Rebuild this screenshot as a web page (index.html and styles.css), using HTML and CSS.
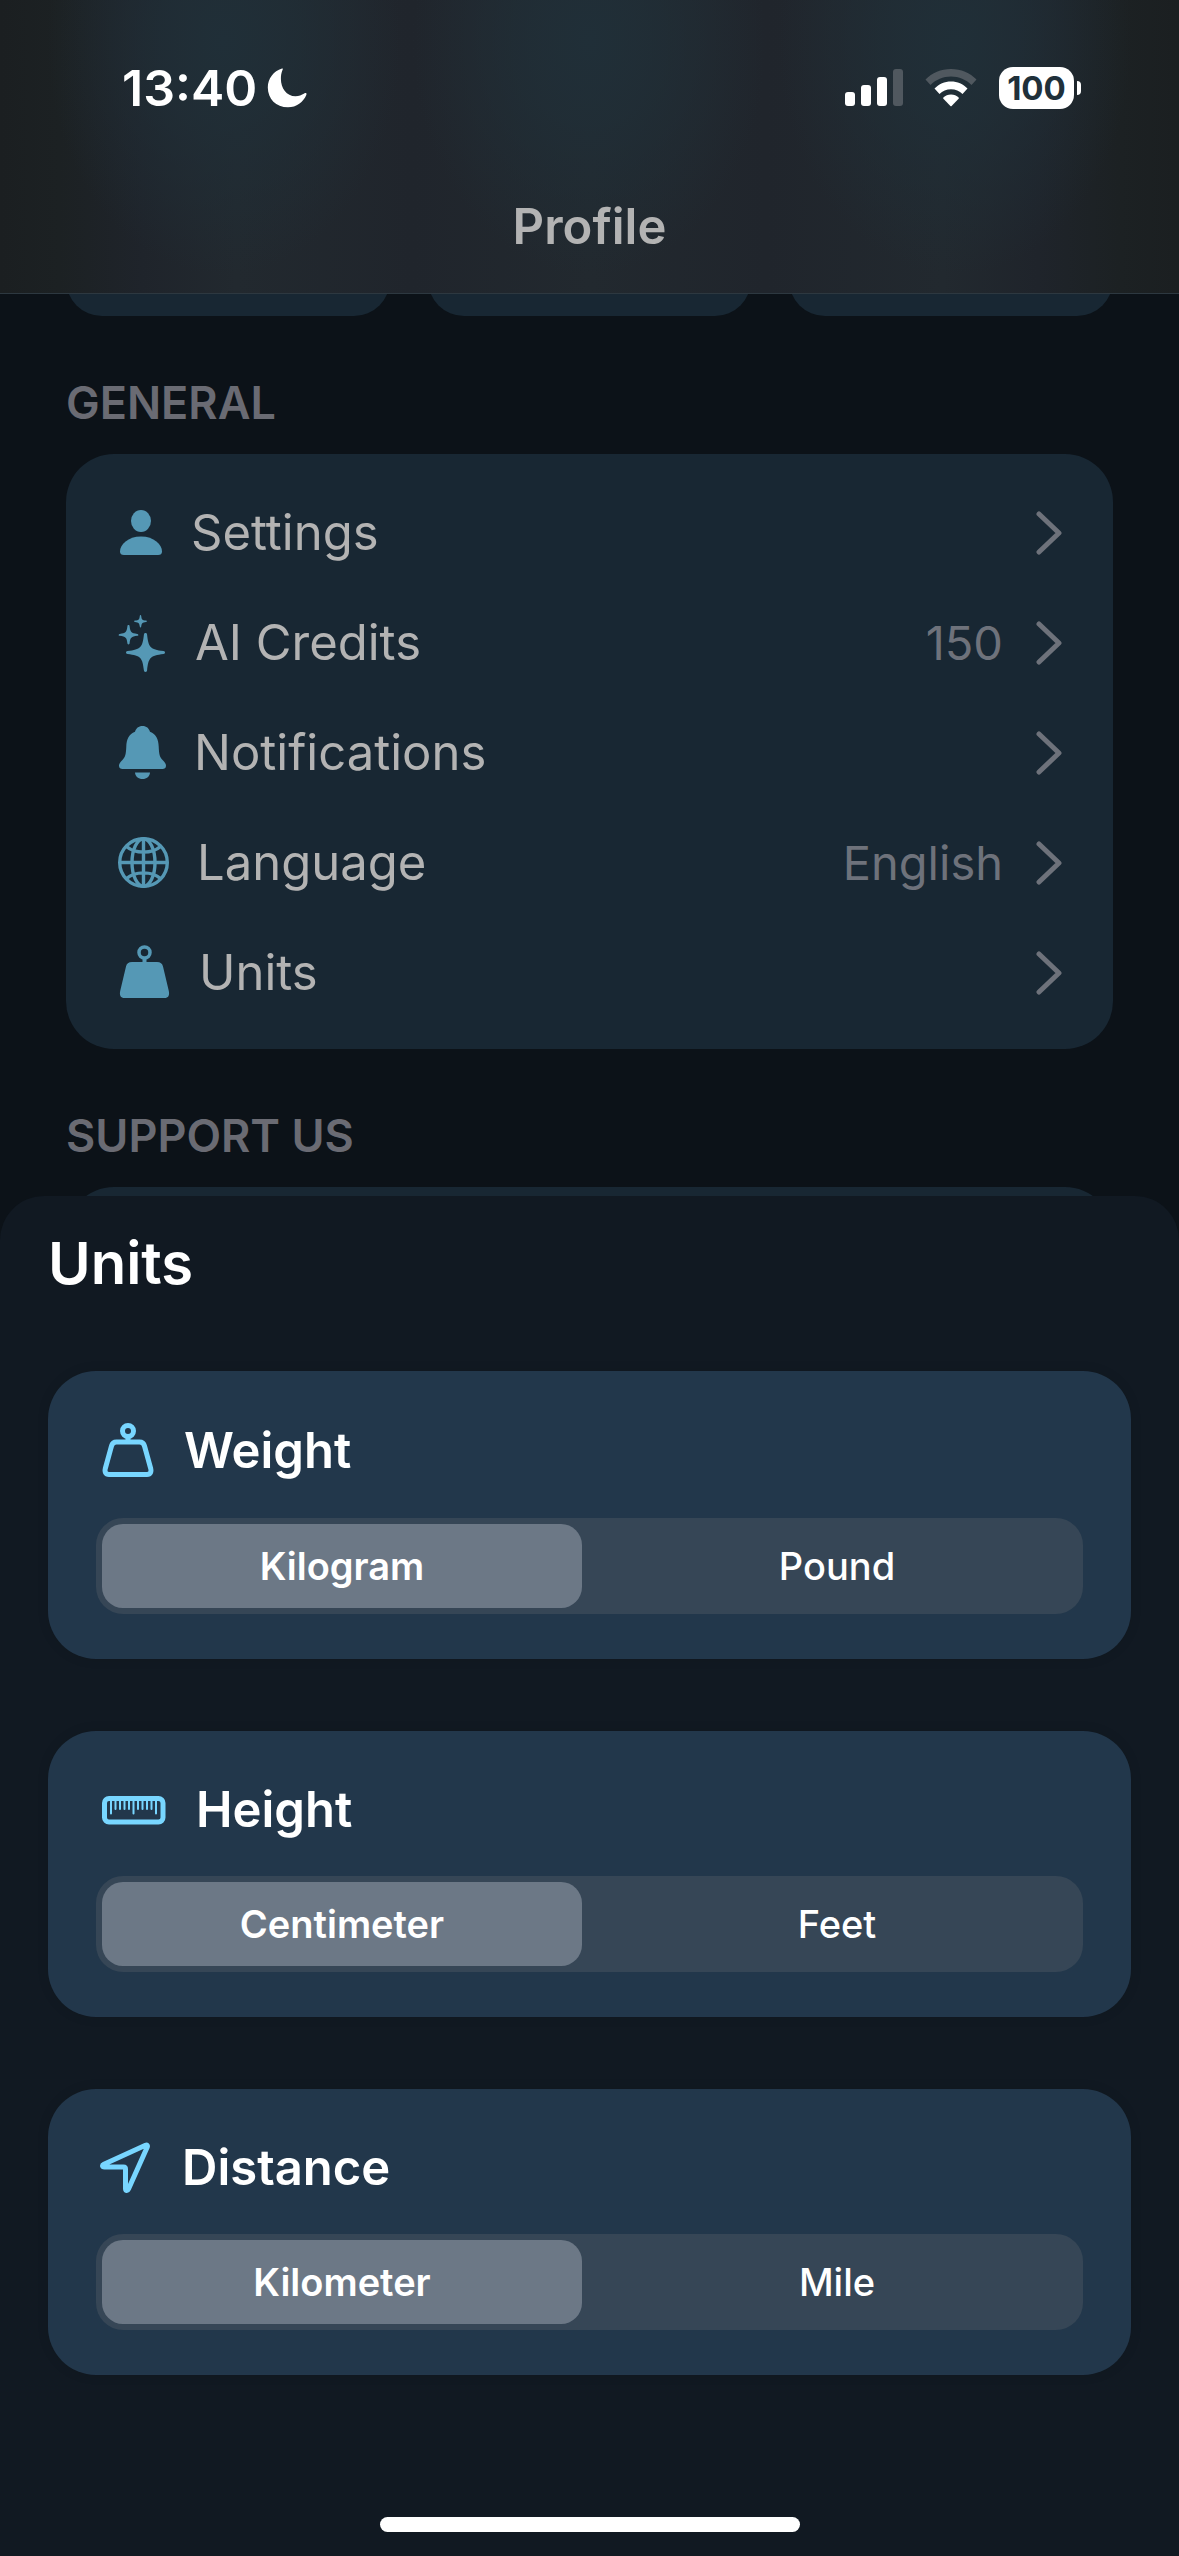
FILE: index.html
```html
<!DOCTYPE html>
<html lang="en">
<head>
<meta charset="utf-8">
<meta name="viewport" content="width=device-width, initial-scale=1">
<title>Profile</title>
<link rel="stylesheet" href="styles.css">
</head>
<body>
<header class="topbar">
  <div class="status">
    <div class="status-left">
      <time class="clock">13:40</time>
      <svg class="moon" width="40" height="40" viewBox="0 0 40 40" aria-hidden="true"><path d="M15 .6C16.200 .2 16 1 15.400 2.200C14.200 5 13.900 8 13.900 11C13.900 20 19.500 28.300 28.500 28.300C32 28.300 34.500 27 37.200 25.500C38.800 24.700 39.900 25.200 39.400 26.700C36.400 34 29.500 39.300 21 39.300C9 39.300 .8 30.800 .8 19.500C.8 10.800 6.500 3.300 15 .6Z"/></svg>
    </div>
    <div class="status-right">
      <svg width="58" height="38" viewBox="0 0 58 38" fill="#fff" aria-hidden="true"><rect x="0" y="23" width="10" height="14" rx="3"/><rect x="16" y="16" width="10" height="21" rx="3"/><rect x="32" y="8" width="10" height="29" rx="3"/><rect class="dim" x="48" y="0" width="10" height="37" rx="3"/></svg>
      <svg width="52" height="38" viewBox="0 0 52 38" aria-hidden="true"><path class="dim" d="M26 0C36 0 45 4 51.500 10.500L46.500 16C41 10.500 34 7.500 26 7.500S11 10.500 5.500 16L.5 10.500C7 4 16 0 26 0Z"/><path fill="#fff" d="M26 12.500C32.500 12.500 38 15 42.500 19.500L37.500 25C34.500 22 30.500 20.300 26 20.300S17.500 22 14.500 25L9.500 19.500C14 15 19.500 12.500 26 12.500Z"/><path fill="#fff" d="M26 25.500C29 25.500 31.700 26.600 33.600 28.500C34 29 34 29.300 33.600 29.800L26.600 37C26.200 37.400 25.800 37.400 25.400 37L18.400 29.800C18 29.300 18 29 18.400 28.500C20.300 26.600 23 25.500 26 25.500Z"/></svg>
      <div class="battery"><span class="battery-level">100</span><span class="battery-cap"></span></div>
    </div>
  </div>
  <h1 class="page-title">Profile</h1>
</header>

<main class="page">
  <div class="stats">
    <div class="stat"></div><div class="stat"></div><div class="stat"></div>
  </div>

  <section class="group">
    <h2 class="group-title">GENERAL</h2>
    <div class="panel">
      <button class="row" type="button">
        <svg width="46" height="60" viewBox="0 0 46 60" aria-hidden="true"><ellipse cx="24" cy="18" rx="10" ry="11"/><path d="M7 52Q3 52 3 48.500C3 41.500 11 33.500 24 33.500S45 41.500 45 48.500Q45 52 41 52Z"/></svg>
        <span class="row-label">Settings</span>
        <svg class="chevron" width="26" height="44" viewBox="0 0 26 44" aria-hidden="true"><path d="M3 3L23 22L3 41"/></svg>
      </button>
      <button class="row" type="button">
        <svg width="50" height="60" viewBox="0 0 50 60" aria-hidden="true"><path d="M28.500 20C29.500 20 30 20.700 30.100 21.700C31.500 34 33 36.500 46.500 38C47.500 38.100 48 38.600 48 39.500S47.500 40.900 46.500 41C33 42.500 31.500 45 30.100 57.300C30 58.300 29.500 59 28.500 59S27 58.300 26.900 57.300C25.500 45 24 42.500 10.500 41C9.500 40.900 9 40.400 9 39.500S9.500 38.100 10.500 38C24 36.500 25.500 34 26.900 21.700C27 20.700 27.500 20 28.500 20Z"/><path d="M11.500 12C12.300 12 12.500 12.500 12.600 13.200C13.300 19 14.200 20 20.300 20.900C21 21 21.300 21.300 21.300 21.900S21 22.700 20.300 22.800C14.200 23.700 13.300 24.500 12.600 30.300C12.500 31 12.300 31.500 11.500 31.500S10.500 31 10.400 30.300C9.700 24.500 8.800 23.700 2.700 22.800C2 22.700 1.700 22.500 1.700 21.900S2 21 2.700 20.900C8.800 20 9.700 19 10.400 13.200C10.500 12.500 10.700 12 11.500 12Z"/><path d="M23.500 2C24 2 24.100 2.400 24.200 2.900C24.700 6.500 25.200 7 29 7.500C29.600 7.600 29.900 7.800 29.900 8.200S29.600 8.800 29 8.900C25.200 9.400 24.700 9.900 24.200 13.500C24.100 14 24 14.400 23.500 14.400S22.900 14 22.800 13.500C22.300 9.900 21.800 9.400 18 8.900C17.400 8.800 17.100 8.600 17.100 8.200S17.400 7.600 18 7.500C21.800 7 22.300 6.500 22.800 2.900C22.900 2.400 23 2 23.500 2Z"/></svg>
        <span class="row-label">AI Credits</span>
        <span class="row-value">150</span>
        <svg class="chevron" width="26" height="44" viewBox="0 0 26 44" aria-hidden="true"><path d="M3 3L23 22L3 41"/></svg>
      </button>
      <button class="row" type="button">
        <svg width="49" height="60" viewBox="0 0 49 60" aria-hidden="true"><path d="M25.500 3C29.500 3 32 5.300 33 8.800C39 11 41.500 16.500 41.700 23.500C42 31 42.500 34 45.800 37.200C48 39.500 49 41 49 42.800C49 45 47.500 46 45.500 46H5.500C3.500 46 2 45 2 42.800C2 41 3 39.500 5.200 37.200C8.500 34 9 31 9.300 23.500C9.500 16.500 12 11 18 8.800C19 5.300 21.500 3 25.500 3Z"/><path d="M18 49.500H33C33 53.300 29.500 56 25.500 56S18 53.300 18 49.500Z"/></svg>
        <span class="row-label">Notifications</span>
        <svg class="chevron" width="26" height="44" viewBox="0 0 26 44" aria-hidden="true"><path d="M3 3L23 22L3 41"/></svg>
      </button>
      <button class="row" type="button">
        <svg class="line" width="52" height="60" viewBox="0 0 52 60" aria-hidden="true"><circle cx="26.500" cy="29.500" r="23.800"/><ellipse cx="26.500" cy="29.500" rx="11.500" ry="23.800"/><path d="M26.500 5.500V53.500M2.500 29.500H50.500M9.500 13.500C18 21 35 21 43.500 13.500M9.500 45.500C18 38 35 38 43.500 45.500"/></svg>
        <span class="row-label">Language</span>
        <span class="row-value">English</span>
        <svg class="chevron" width="26" height="44" viewBox="0 0 26 44" aria-hidden="true"><path d="M3 3L23 22L3 41"/></svg>
      </button>
      <button class="row" type="button">
        <svg width="54" height="60" viewBox="0 0 54 60" aria-hidden="true"><circle cx="27.500" cy="9.500" r="5.500" fill="none" stroke="#5598b5" stroke-width="3.500"/><path d="M25.500 14H29.500V19H40C43.500 19 45.300 20.500 46 23.500L51.700 47.500C52.900 52.500 51.200 55 47.500 55H7.500C3.800 55 2.100 52.500 3.300 47.500L9 23.500C9.700 20.500 11.500 19 15 19H25.500Z"/></svg>
        <span class="row-label">Units</span>
        <svg class="chevron" width="26" height="44" viewBox="0 0 26 44" aria-hidden="true"><path d="M3 3L23 22L3 41"/></svg>
      </button>
    </div>
  </section>

  <section class="group">
    <h2 class="group-title">SUPPORT US</h2>
    <div class="panel panel-empty"></div>
  </section>
</main>

<section class="sheet" role="dialog" aria-labelledby="sheet-title">
  <h2 class="sheet-title" id="sheet-title">Units</h2>
  <form class="cards">
    <fieldset class="card" aria-labelledby="weight-title">
      <div class="card-head">
        <svg class="accent" width="54" height="63" viewBox="0 0 54 63" aria-hidden="true"><ellipse cx="28" cy="12" rx="5.500" ry="5.500"/><path d="M28 17.500V22M16.500 23H39.500C42.300 23 43.800 24.300 44.500 27L50.700 49.500C51.500 53 50.500 55.500 47 55.500H9C5.500 55.500 4.500 53 5.300 49.500L11.500 27C12.200 24.300 13.700 23 16.500 23Z"/></svg>
        <h3 class="card-title" id="weight-title">Weight</h3>
      </div>
      <div class="segments">
        <label class="segment"><input type="radio" name="weight" value="kg" checked><span>Kilogram</span></label>
        <label class="segment"><input type="radio" name="weight" value="lb"><span>Pound</span></label>
      </div>
    </fieldset>
    <fieldset class="card" aria-labelledby="height-title">
      <div class="card-head">
        <svg class="accent" width="66" height="60" viewBox="0 0 66 60" aria-hidden="true"><rect x="4.500" y="18.500" width="58.500" height="23.500" rx="4.500"/><path stroke-width="2" d="M11 18V33.500M15.500 18V29M20 18V29M24.500 18V29M29 18V29M33.500 18V33.500M38 18V29M42.500 18V29M47 18V29M51.500 18V29M56 18V33.500"/></svg>
        <h3 class="card-title" id="height-title">Height</h3>
      </div>
      <div class="segments">
        <label class="segment"><input type="radio" name="height" value="cm" checked><span>Centimeter</span></label>
        <label class="segment"><input type="radio" name="height" value="ft"><span>Feet</span></label>
      </div>
    </fieldset>
    <fieldset class="card" aria-labelledby="distance-title">
      <div class="card-head">
        <svg class="accent" width="52" height="60" viewBox="0 0 52 60" aria-hidden="true"><path d="M3.900 26.300L45.500 7.300C47 6.700 47.800 7.500 47.300 9L28.500 51C27.400 53.400 25.500 53 25.500 50.500V31C25.500 29.500 25 29 23.500 29H4.500C2.200 29 1.800 27.300 3.900 26.300Z"/></svg>
        <h3 class="card-title" id="distance-title">Distance</h3>
      </div>
      <div class="segments">
        <label class="segment"><input type="radio" name="distance" value="km" checked><span>Kilometer</span></label>
        <label class="segment"><input type="radio" name="distance" value="mi"><span>Mile</span></label>
      </div>
    </fieldset>
  </form>
  <div class="home-indicator"></div>
</section>
</body>
</html>
```
FILE: styles.css
```css
* { box-sizing: border-box; margin: 0; padding: 0; }

body {
  min-height: 100vh;
  background: #0c1218;
  color: #b3b3b3;
  font-family: Inter, "Liberation Sans", sans-serif;
  overflow: hidden;
}

button { font: inherit; color: inherit; background: none; border: 0; }
svg { display: block; flex: none; }

/* Top bar */
.topbar {
  position: relative;
  z-index: 1;
  height: 294px;
  padding-top: 58px;
  border-bottom: 1px solid #2d3840;
  background:
    radial-gradient(ellipse 15% 80% at 19% 14%, #202f38 0%, #202f38bb 35%, #202f3800 100%),
    radial-gradient(ellipse 15% 80% at 50% 14%, #202f38 0%, #202f38bb 35%, #202f3800 100%),
    radial-gradient(ellipse 15% 80% at 81% 14%, #202f38 0%, #202f38bb 35%, #202f3800 100%),
    linear-gradient(90deg, #1b1f21 0%, #1c2123 5%, #1f242b 12%, #22292f 20%, #20252c 35%, #22292f 50%, #20252c 65%, #22292f 80%, #1f242b 88%, #1c2123 95%, #1b1f21 100%);
}
.status {
  display: flex;
  justify-content: space-between;
  align-items: center;
  height: 60px;
  padding: 0 98px 0 122px;
  color: #fff;
}
.status-left { display: flex; align-items: center; gap: 10px; }
.status-right { display: flex; align-items: center; gap: 22px; }
.clock { font-size: 50px; line-height: 60px; font-weight: 600; }
.moon { fill: #fff; }
.dim { fill: #50585f; }
.battery { display: flex; align-items: center; gap: 3px; }
.battery-level {
  width: 75px;
  border-radius: 14px;
  background: #fff;
  color: #20303a;
  font-size: 33px;
  line-height: 42px;
  font-weight: 700;
  text-align: center;
}
.battery-cap { width: 4px; height: 14px; border-radius: 0 4px 4px 0; background: #fff; }
.page-title {
  margin-top: 78px;
  font-size: 49px;
  line-height: 62px;
  font-weight: 600;
  text-align: center;
}

/* Profile page */
.page { padding: 0 66px; }
.stats {
  display: grid;
  grid-template-columns: repeat(3, 1fr);
  gap: 38px;
  margin-top: -48px;
}
.stat { height: 70px; border-radius: 0 0 36px 36px; background: #182733; }
.group { padding-top: 60px; }
.group-title {
  margin-bottom: 24px;
  color: #6a6b73;
  font-size: 45px;
  line-height: 54px;
  font-weight: 600;
}
.panel {
  padding: 24px 51px 21px;
  border-radius: 48px;
  background: #182733;
}
.panel-empty { height: 240px; }
.row {
  display: flex;
  align-items: center;
  width: 100%;
  height: 110px;
  text-align: left;
  fill: #5598b5;
}
.row-label {
  flex: 1;
  margin-left: 28px;
  font-size: 49px;
  line-height: 60px;
}
.row-value { color: #6e727b; font-size: 47px; line-height: 60px; }
.chevron {
  margin-left: 33px;
  fill: none;
  stroke: #6e727b;
  stroke-width: 5;
  stroke-linecap: round;
  stroke-linejoin: round;
}
.line { fill: none; stroke: #5598b5; stroke-width: 3.4; }

/* Bottom sheet */
.sheet {
  position: fixed;
  z-index: 2;
  left: 0;
  right: 0;
  bottom: 0;
  padding: 31px 48px 24px;
  border-radius: 44px 44px 0 0;
  background: #111922;
  color: #fff;
}
.sheet-title {
  margin-bottom: 72px;
  font-size: 58px;
  line-height: 72px;
  font-weight: 600;
}
.cards { display: grid; gap: 72px; }
.card {
  min-width: 0;
  padding: 48px 48px 45px;
  border: 0;
  border-radius: 48px;
  background: #22374b;
  box-shadow: 0 0 12px #0000001a;
}
.card-head {
  display: flex;
  align-items: center;
  gap: 30px;
  min-height: 61px;
  margin-bottom: 36px;
  padding-left: 4px;
}
.card-title { font-size: 49px; line-height: 61px; font-weight: 600; }
.accent {
  fill: none;
  stroke: #78d6ff;
  stroke-width: 5;
  stroke-linecap: round;
  stroke-linejoin: round;
}
.segments {
  display: grid;
  grid-template-columns: 1fr 1fr;
  gap: 15px;
  padding: 6px;
  border-radius: 27px;
  background: #364656;
}
.segment {
  border-radius: 21px;
  font-size: 38px;
  line-height: 84px;
  font-weight: 500;
  text-align: center;
}
.segment:has(input:checked) { background: #6c7886; font-weight: 600; }
.segment input { position: absolute; appearance: none; }
.home-indicator {
  width: 420px;
  height: 15px;
  margin: 142px auto 0;
  border-radius: 8px;
  background: #fff;
}
```
